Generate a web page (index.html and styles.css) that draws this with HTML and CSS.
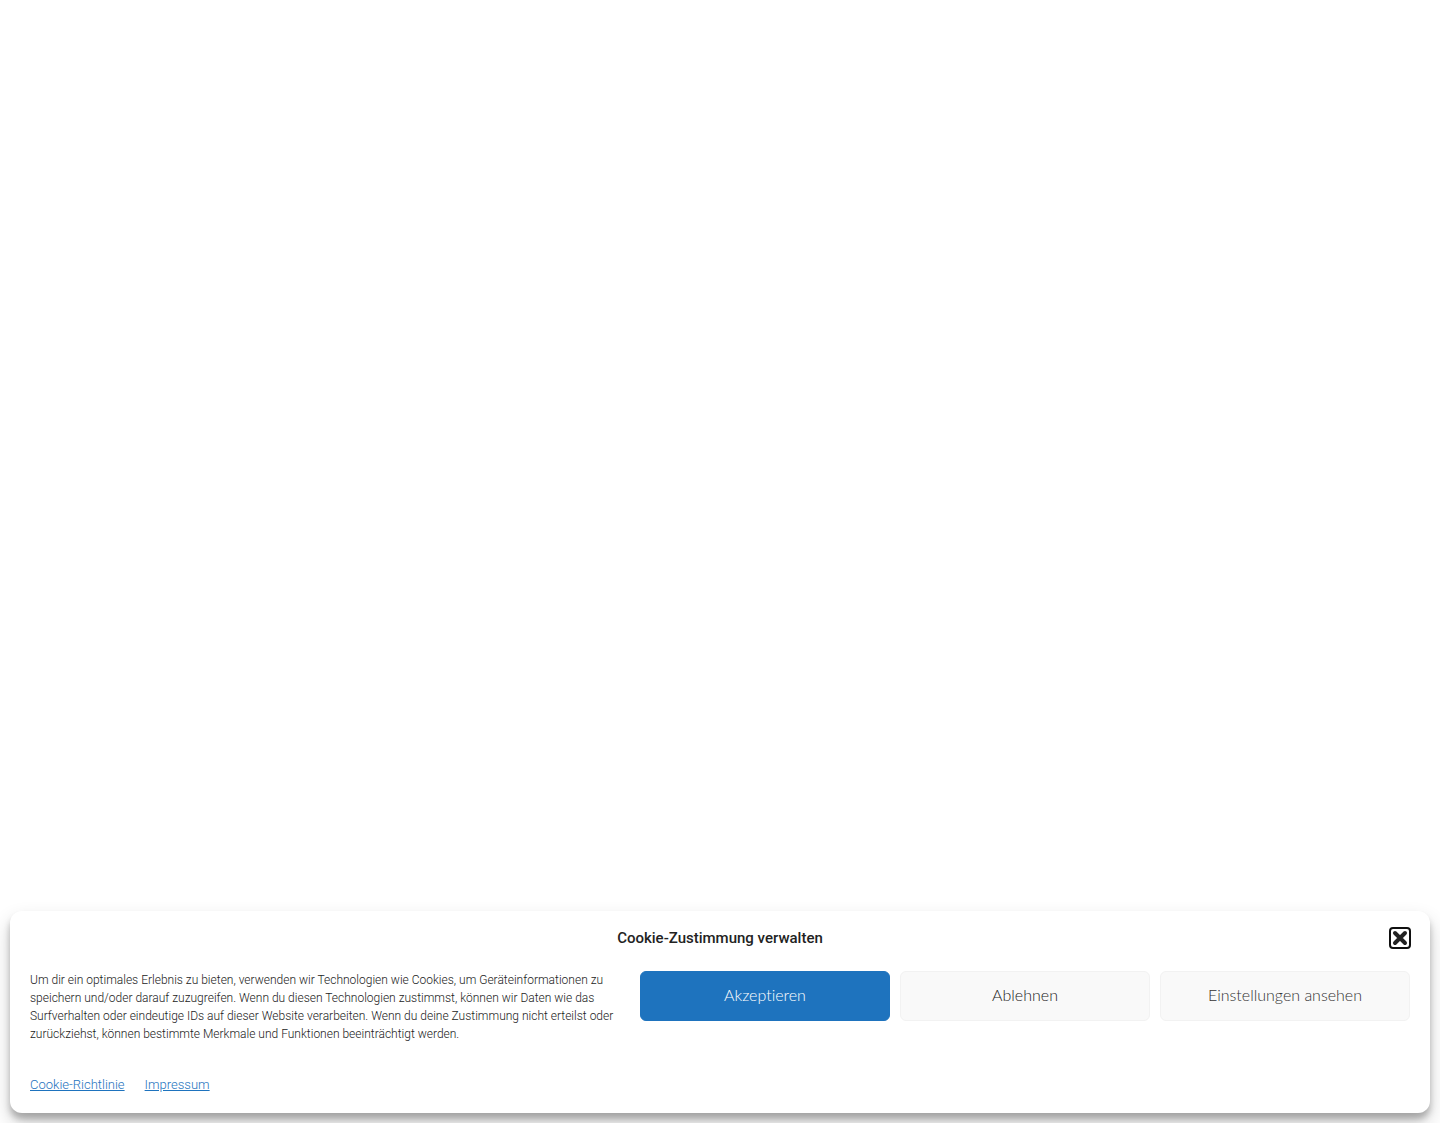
FILE: index.html
```
<!DOCTYPE html>
<html lang="de">
<head>
    <meta charset="UTF-8">
    <meta name="viewport" content="width=device-width, initial-scale=1.0">
    <title>Cookie-Zustimmung verwalten</title>
    <link rel="stylesheet" href="styles.css">
</head>
<body>
    <section class="cookie-banner" role="dialog" aria-labelledby="cookie-title">
        <header class="banner-header">
            <h2 class="banner-title" id="cookie-title">Cookie-Zustimmung verwalten</h2>
            <button class="banner-close" type="button" aria-label="Dialog schließen">
                <svg viewBox="0 0 20 20" width="20" height="20" aria-hidden="true">
                    <path d="M5 5L15 15M15 5L5 15" fill="none" stroke="#222" stroke-width="4" stroke-linecap="round"/>
                </svg>
            </button>
        </header>
        <div class="banner-body">
            <p class="banner-message">Um dir ein optimales Erlebnis zu bieten, verwenden wir Technologien wie Cookies, um Geräteinformationen zu speichern und/oder darauf zuzugreifen. Wenn du diesen Technologien zustimmst, können wir Daten wie das Surfverhalten oder eindeutige IDs auf dieser Website verarbeiten. Wenn du deine Zustimmung nicht erteilst oder zurückziehst, können bestimmte Merkmale und Funktionen beeinträchtigt werden.</p>
            <div class="banner-buttons">
                <button class="btn btn-accept" type="button">Akzeptieren</button>
                <button class="btn btn-deny" type="button">Ablehnen</button>
                <button class="btn btn-settings" type="button">Einstellungen ansehen</button>
            </div>
        </div>
        <nav class="banner-links">
            <a href="#cookie-richtlinie">Cookie-Richtlinie</a>
            <a href="#impressum">Impressum</a>
        </nav>
    </section>
</body>
</html>
```
FILE: styles.css
```
* {
    box-sizing: border-box;
}
body {
    display: flex;
    flex-direction: column;
    justify-content: flex-end;
    min-height: 100vh;
    margin: 0;
    padding: 10px;
    background-color: #fff;
    color: #222;
    font-family: Roboto, sans-serif;
    font-weight: 300;
}
.cookie-banner {
    padding: 16px 20px 18px;
    border-radius: 12px;
    background-color: #fff;
    box-shadow: 0 10px 20px rgba(0,0,0,0.19), 0 6px 6px rgba(0,0,0,0.23);
}
.banner-header {
    display: grid;
    grid-template-columns: 1fr auto 1fr;
    align-items: center;
    margin-bottom: 22px;
}
.banner-title {
    grid-column: 2;
    margin: 0;
    font-size: 15px;
    font-weight: 500;
    line-height: 22px;
}
.banner-close {
    justify-self: end;
    width: 20px;
    height: 20px;
    padding: 0;
    border: none;
    border-radius: 3px;
    background: none;
    outline: 2px solid #101010;
    outline-offset: -1px;
    cursor: pointer;
}
.banner-close svg {
    display: block;
}
.banner-body {
    display: flex;
    flex-wrap: wrap;
    gap: 10px;
}
.banner-message {
    flex: 1 1 400px;
    margin: 0;
    font-size: 12px;
    line-height: 18px;
}
.banner-buttons {
    display: flex;
    flex-wrap: wrap;
    gap: 10px;
}
.btn {
    width: 250px;
    height: 50px;
    padding: 0 10px 4px;
    border: 1px solid #f2f2f2;
    border-radius: 6px;
    background-color: #f9f9f9;
    color: #222;
    font-family: Lato, sans-serif;
    font-size: 16px;
    font-weight: 300;
    font-variant-ligatures: none;
    cursor: pointer;
}
.btn-accept {
    border-color: #1e73be;
    background-color: #1e73be;
    color: #fff;
}
.btn-settings {
    color: #333;
}
.banner-links {
    display: flex;
    gap: 20px;
    margin-top: 32px;
    font-size: 13px;
    line-height: 20px;
}
.banner-links a {
    color: #1e73be;
}
```
